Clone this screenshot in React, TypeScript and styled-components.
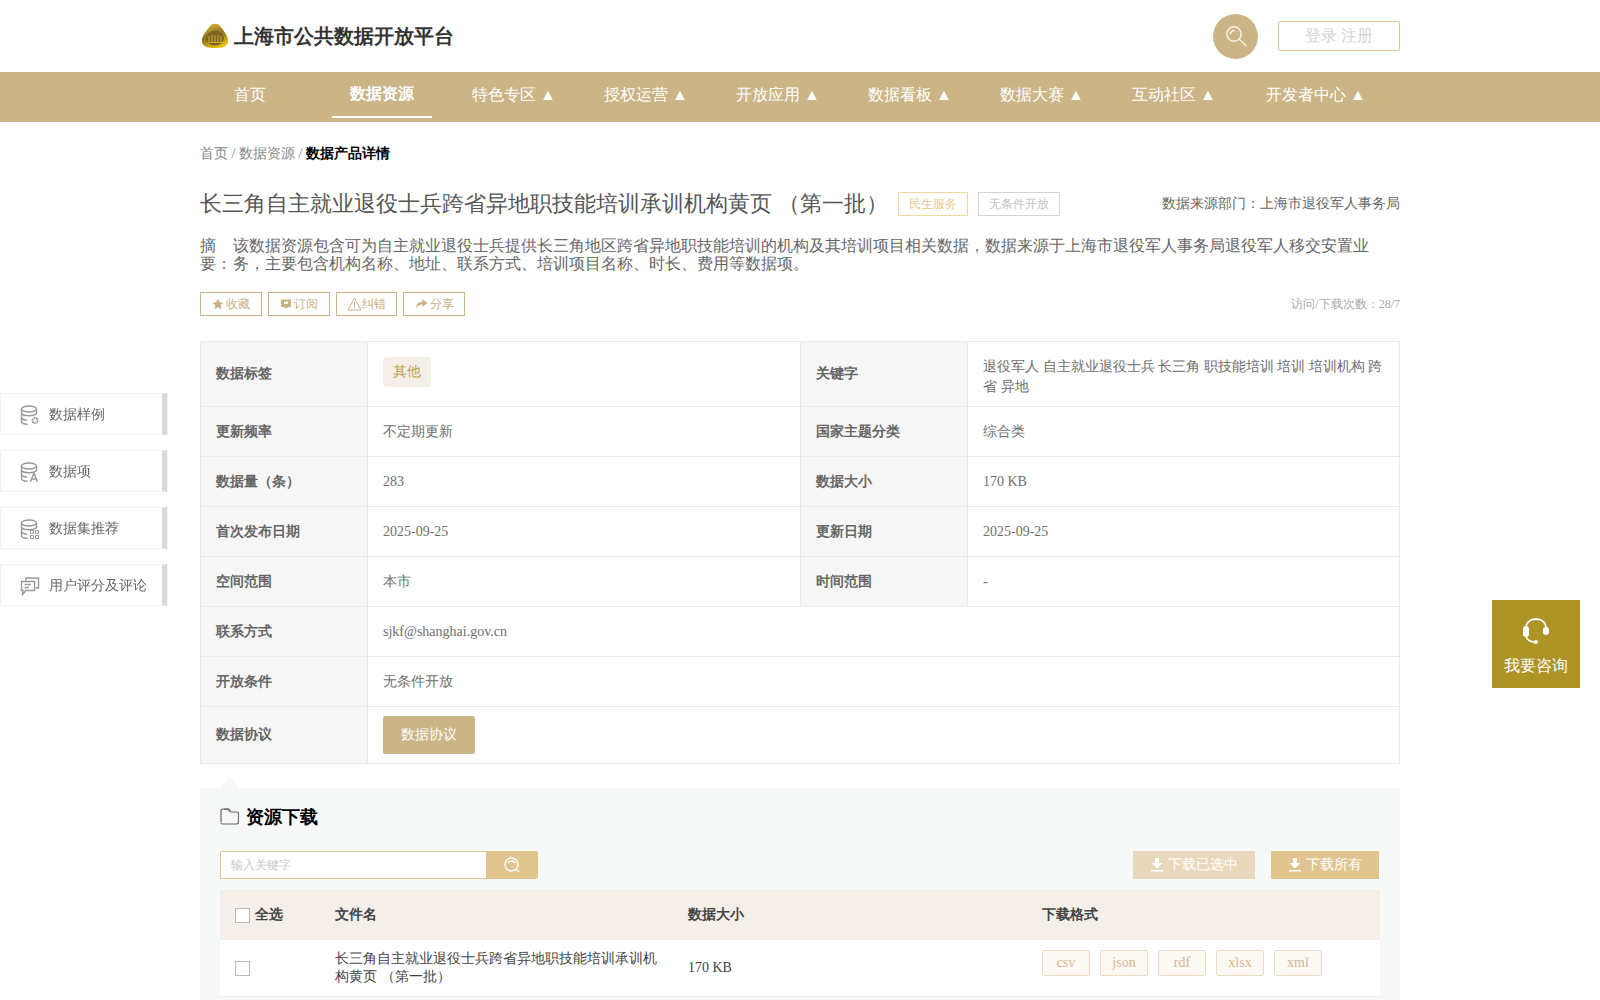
import styled, { createGlobalStyle } from 'styled-components';
import { ReactNode } from 'react';

const GlobalStyle = createGlobalStyle`
	html, body {
		margin: 0;
		padding: 0;
		height: 1000px;
		overflow: hidden;
		background: #fff;
		font-family: 'Liberation Serif', serif;
		color: #666;
	}
	* {
		box-sizing: border-box;
	}
`;

const navItems = [
	{ label: '首页' },
	{ label: '数据资源', active: true },
	{ label: '特色专区 ▲' },
	{ label: '授权运营 ▲' },
	{ label: '开放应用 ▲' },
	{ label: '数据看板 ▲' },
	{ label: '数据大赛 ▲' },
	{ label: '互动社区 ▲' },
	{ label: '开发者中心 ▲' },
];

const Logo = () => (
	<svg width="28" height="26" viewBox="0 0 28 26">
		<defs>
			<linearGradient id="logoGold" x1="0.2" y1="0" x2="0.6" y2="1">
				<stop offset="0" stopColor="#d9b93c" />
				<stop offset="0.5" stopColor="#8f701e" />
				<stop offset="1" stopColor="#e8c40c" />
			</linearGradient>
		</defs>
		<path
			d="M9 3C11 0 17 0 19 3C23 8 28 14 27 19C26 24 21 25 14 25C7 25 2 24 1 19C0 14 5 8 9 3Z"
			fill="url(#logoGold)"
		/>
		<ellipse cx="14" cy="15" rx="9" ry="7.500" fill="#7d6420" />
		<path d="M8 13V19M11 12V19M14 12V19M17 12V19M20 13V19M7 19.500H21" stroke="#c9a944" strokeWidth="1" />
	</svg>
);

const SearchGlyph = () => (
	<svg width="22" height="22" viewBox="0 0 22 22" fill="none" stroke="#f6f1e6" strokeWidth="1.500" strokeLinecap="round">
		<circle cx="9" cy="9" r="7.200" />
		<path d="M5.500 8.500C5.800 6.800 7 5.600 9 5.400" />
		<path d="M14.200 14.200L21 20.500" />
	</svg>
);

const KeywordGlyph = () => (
	<svg width="16" height="16" viewBox="0 0 16 16" fill="none" stroke="#fff" strokeWidth="1.300" strokeLinecap="round">
		<circle cx="7.500" cy="7.500" r="6.500" />
		<path d="M4 5.500C5 3.800 9.500 3.800 11 5.500" />
		<path d="M12.500 13L15 14.500" />
	</svg>
);

const Star = () => (
	<svg width="12" height="12" viewBox="0 0 12 12" fill="#c9b183">
		<path d="M6 .8l1.700 3.400 3.700.5-2.700 2.600.7 3.800L6 9.300l-3.400 1.800.7-3.800L.6 4.700l3.700-.5z" />
	</svg>
);

const Bookmark = () => (
	<svg width="12" height="12" viewBox="0 0 12 12">
		<path d="M1 1.500h10v7.500H8l-2 2-2-2H1z" fill="#c9b183" />
		<rect x="4" y="3.500" width="4" height="2.500" fill="#fff" />
	</svg>
);

const Warn = () => (
	<svg width="15" height="14" viewBox="0 0 15 14" fill="none" stroke="#c9b183" strokeWidth="1">
		<path d="M7.500 1L14 13H1z" />
		<path d="M7.500 5v4.500M7.500 10.500v1" />
	</svg>
);

const ShareArrow = () => (
	<svg width="13" height="12" viewBox="0 0 13 12" fill="#c9b183">
		<path d="M7.500 1L12.500 5 7.500 9V6.500C4.500 6.500 2.500 7.500 1 10.500 1.300 6.500 3.500 3.800 7.500 3.500z" />
	</svg>
);

const DownloadGlyph = () => (
	<svg width="12" height="14" viewBox="0 0 12 14" fill="#fff">
		<path d="M4 0h4v5h3.500L6 10.500.5 5H4z" />
		<rect x="0" y="12" width="12" height="1.500" />
	</svg>
);

const DbBase = () => (
	<>
		<ellipse cx="9" cy="4" rx="7.500" ry="3" />
		<path d="M1.500 4V16.500c0 1.500 2.500 2.600 6 2.800" />
		<path d="M16.500 4V9" />
		<path d="M1.500 8.500c1 1.500 3.500 2.200 7.500 2.200 3.200 0 6.300-.7 7.500-2.200" />
		<path d="M1.500 13c1 1.300 3 2 5.500 2.200" />
	</>
);

const SideIcon = ({ kind }: { kind: string }) => (
	<svg width="20" height="20" viewBox="0 0 20 20" fill="none" stroke="#999" strokeWidth="1.400">
		{kind === 'comment' ? (
			<>
				<path d="M6 5.500V2h12.500v10H15.500" />
				<path d="M1.500 5.500H14.500V14.500H6L2.500 18.500 3 14.500H1.500z" />
				<path d="M4.500 8.500H11M4.500 11.500H9" />
			</>
		) : (
			<>
				<DbBase />
				{kind === 'gear' && <circle cx="15" cy="15.500" r="2.600" strokeWidth="1.800" strokeDasharray="2 .6" />}
				{kind === 'letter' && <path d="M10.500 19.800L14 11 17.500 19.800M11.800 17H16.200" strokeWidth="1.500" />}
				{kind === 'grid' && (
					<path d="M10.500 11.500h3v3h-3zM15.500 11.500h3v3h-3zM10.500 16.500h3v3h-3zM15.500 16.500h3v3h-3z" strokeWidth="1" />
				)}
			</>
		)}
	</svg>
);

const sideItems = [
	{ label: '数据样例', icon: 'gear' },
	{ label: '数据项', icon: 'letter' },
	{ label: '数据集推荐', icon: 'grid' },
	{ label: '用户评分及评论', icon: 'comment' },
];

const actions: { label: string; icon: ReactNode }[] = [
	{ label: '收藏', icon: <Star /> },
	{ label: '订阅', icon: <Bookmark /> },
	{ label: '纠错', icon: <Warn /> },
	{ label: '分享', icon: <ShareArrow /> },
];

const formats = ['csv', 'json', 'rdf', 'xlsx', 'xml'];

const App = () => {
	return (
		<>
			<GlobalStyle />
			<Header>
				<HeaderInner>
					<Brand>
						<Logo />
						<BrandName>上海市公共数据开放平台</BrandName>
					</Brand>
					<HeaderRight>
						<SearchCircle>
							<SearchGlyph />
						</SearchCircle>
						<LoginBox>登录 注册</LoginBox>
					</HeaderRight>
				</HeaderInner>
			</Header>
			<NavBar>
				<NavInner>
					{navItems.map((item) => (
						<NavItem key={item.label} $active={item.active}>
							{item.label}
						</NavItem>
					))}
				</NavInner>
			</NavBar>

			<Main>
				<Breadcrumb>
					首页 / 数据资源 / <strong>数据产品详情</strong>
				</Breadcrumb>
				<TitleRow>
					<Title>长三角自主就业退役士兵跨省异地职技能培训承训机构黄页 （第一批）</Title>
					<TitleTag $tone="gold">民生服务</TitleTag>
					<TitleTag $tone="grey">无条件开放</TitleTag>
					<Source>数据来源部门：上海市退役军人事务局</Source>
				</TitleRow>
				<Summary>
					<SummaryLabel>
						摘<br />要：
					</SummaryLabel>
					<SummaryText>
						该数据资源包含可为自主就业退役士兵提供长三角地区跨省异地职技能培训的机构及其培训项目相关数据，数据来源于上海市退役军人事务局退役军人移交安置业务，主要包含机构名称、地址、联系方式、培训项目名称、时长、费用等数据项。
					</SummaryText>
				</Summary>
				<ActionRow>
					<Actions>
						{actions.map((a) => (
							<ActionButton key={a.label}>
								{a.icon}
								{a.label}
							</ActionButton>
						))}
					</Actions>
					<Visits>访问/下载次数：28/7</Visits>
				</ActionRow>

				<InfoTable>
					<colgroup>
						<col width="167" />
						<col width="433" />
						<col width="167" />
						<col width="432" />
					</colgroup>
					<tbody>
						<InfoRow $height={65}>
							<LabelCell>数据标签</LabelCell>
							<ValueCell>
								<TagChip>其他</TagChip>
							</ValueCell>
							<LabelCell>关键字</LabelCell>
							<ValueCell>
								<Keywords>退役军人 自主就业退役士兵 长三角 职技能培训 培训 培训机构 跨省 异地</Keywords>
							</ValueCell>
						</InfoRow>
						<InfoRow>
							<LabelCell>更新频率</LabelCell>
							<ValueCell>不定期更新</ValueCell>
							<LabelCell>国家主题分类</LabelCell>
							<ValueCell>综合类</ValueCell>
						</InfoRow>
						<InfoRow>
							<LabelCell>数据量（条）</LabelCell>
							<ValueCell>283</ValueCell>
							<LabelCell>数据大小</LabelCell>
							<ValueCell>170 KB</ValueCell>
						</InfoRow>
						<InfoRow>
							<LabelCell>首次发布日期</LabelCell>
							<ValueCell>2025-09-25</ValueCell>
							<LabelCell>更新日期</LabelCell>
							<ValueCell>2025-09-25</ValueCell>
						</InfoRow>
						<InfoRow>
							<LabelCell>空间范围</LabelCell>
							<ValueCell>本市</ValueCell>
							<LabelCell>时间范围</LabelCell>
							<ValueCell>-</ValueCell>
						</InfoRow>
						<InfoRow>
							<LabelCell>联系方式</LabelCell>
							<ValueCell colSpan={3}>sjkf@shanghai.gov.cn</ValueCell>
						</InfoRow>
						<InfoRow>
							<LabelCell>开放条件</LabelCell>
							<ValueCell colSpan={3}>无条件开放</ValueCell>
						</InfoRow>
						<InfoRow $height={57}>
							<LabelCell>数据协议</LabelCell>
							<ValueCell colSpan={3}>
								<AgreementButton>数据协议</AgreementButton>
							</ValueCell>
						</InfoRow>
					</tbody>
				</InfoTable>

				<DownloadSection>
					<SectionTitle>
						<svg width="19" height="17" viewBox="0 0 19 17" fill="none" stroke="#666" strokeWidth="1.200">
							<path d="M1 14V3a2 2 0 0 1 2-2h4.500l2 2.500" />
							<path d="M4 1.200h5l2 2.800h6a1.500 1.500 0 0 1 1.500 1.500V14a2 2 0 0 1-2 2H2.500A1.500 1.500 0 0 1 1 14.500" />
						</svg>
						<SectionName>资源下载</SectionName>
					</SectionTitle>
					<Toolbar>
						<SearchGroup>
							<KeywordInput placeholder="输入关键字" />
							<KeywordButton>
								<KeywordGlyph />
							</KeywordButton>
						</SearchGroup>
						<DownloadActions>
							<DownloadButton $muted>
								<DownloadGlyph />
								下载已选中
							</DownloadButton>
							<DownloadButton>
								<DownloadGlyph />
								下载所有
							</DownloadButton>
						</DownloadActions>
					</Toolbar>
					<FileTable>
						<FileHead>
							<CheckCol>
								<CheckBox />
								<strong>全选</strong>
							</CheckCol>
							<NameCol>
								<strong>文件名</strong>
							</NameCol>
							<SizeCol>
								<strong>数据大小</strong>
							</SizeCol>
							<FormatCol>
								<strong>下载格式</strong>
							</FormatCol>
						</FileHead>
						<FileRow>
							<CheckCol>
								<CheckBox />
							</CheckCol>
							<NameCol>长三角自主就业退役士兵跨省异地职技能培训承训机构黄页 （第一批）</NameCol>
							<SizeCol>170 KB</SizeCol>
							<FormatCol>
								<Chips>
									{formats.map((f) => (
										<FormatChip key={f}>{f}</FormatChip>
									))}
								</Chips>
							</FormatCol>
						</FileRow>
					</FileTable>
				</DownloadSection>
			</Main>

			<SideMenu>
				{sideItems.map((item) => (
					<SideItem key={item.label}>
						<SideIcon kind={item.icon} />
						{item.label}
					</SideItem>
				))}
			</SideMenu>

			<Consult>
				<svg width="28" height="28" viewBox="0 0 28 28" fill="none">
					<path d="M4 14V11C4 5.500 8.500 2 14 2S24 5.500 24 11V14" stroke="#fff" strokeWidth="1.800" />
					<path d="M4 19C5 23 8 25 13 25" stroke="#fff" strokeWidth="1.500" />
					<rect x="1" y="9" width="6" height="11" rx="3" fill="#fff" />
					<rect x="21" y="10" width="6" height="8" rx="3" fill="#fff" />
					<circle cx="14" cy="25" r="2" fill="#fff" />
				</svg>
				我要咨询
			</Consult>
		</>
	);
};

export default App;

const Header = styled.header`
	height: 72px;
`;
const HeaderInner = styled.div`
	width: 1200px;
	height: 100%;
	margin: 0 auto;
	display: flex;
	align-items: center;
	justify-content: space-between;
`;
const Brand = styled.div`
	display: flex;
	align-items: center;
	gap: 5px;
	padding-left: 1px;
`;
const BrandName = styled.span`
	font-size: 20px;
	font-weight: 700;
	color: #333;
`;
const HeaderRight = styled.div`
	display: flex;
	align-items: center;
	gap: 20px;
`;
const SearchCircle = styled.div`
	width: 45px;
	height: 45px;
	border-radius: 50%;
	background: #cbb486;
	display: flex;
	align-items: center;
	justify-content: center;
`;
const LoginBox = styled.div`
	width: 122px;
	height: 30px;
	border: 1px solid #e2c691;
	border-radius: 2px;
	color: #d4d4d4;
	font-size: 16px;
	line-height: 28px;
	text-align: center;
`;
const NavBar = styled.nav`
	height: 50px;
	background: #cbb486;
`;
const NavInner = styled.div`
	width: 1200px;
	height: 100%;
	margin: 0 auto;
	display: flex;
	gap: 32px;
`;
const NavItem = styled.a<{ $active?: boolean }>`
	min-width: 100px;
	height: 46px;
	padding: 0 8px;
	color: #fff;
	font-size: 16px;
	font-weight: ${(p) => (p.$active ? 700 : 400)};
	line-height: ${(p) => (p.$active ? '44px' : '46px')};
	text-align: center;
	white-space: nowrap;
	border-bottom: 2px solid ${(p) => (p.$active ? '#fff' : 'transparent')};
	&:last-child {
		padding-left: 10px;
		text-align: left;
	}
`;
const Main = styled.main`
	width: 1200px;
	margin: 0 auto;
`;
const Breadcrumb = styled.div`
	margin-top: 23px;
	font-size: 14px;
	line-height: 18px;
	color: #888;
	strong {
		color: #000;
	}
`;
const TitleRow = styled.div`
	margin-top: 25px;
	height: 32px;
	display: flex;
	align-items: center;
`;
const Title = styled.h1`
	margin: 0 10px 0 0;
	font-size: 22px;
	font-weight: 400;
	color: #555;
	white-space: nowrap;
`;
const TitleTag = styled.span<{ $tone: 'gold' | 'grey' }>`
	height: 24px;
	margin-right: 10px;
	padding: 0 10px;
	font-size: 12px;
	line-height: 22px;
	border: 1px solid ${(p) => (p.$tone === 'gold' ? '#f3d79c' : '#d4d4d4')};
	color: ${(p) => (p.$tone === 'gold' ? '#e9c98c' : '#c4c4c4')};
`;
const Source = styled.span`
	margin-left: auto;
	font-size: 14px;
	color: #666;
`;
const Summary = styled.div`
	margin-top: 17px;
	display: flex;
	font-size: 16px;
	line-height: 18px;
	color: #666;
`;
const SummaryLabel = styled.div`
	flex: none;
	width: 33px;
`;
const SummaryText = styled.div`
	width: 1137px;
`;
const ActionRow = styled.div`
	margin-top: 19px;
	display: flex;
	align-items: center;
	justify-content: space-between;
`;
const Actions = styled.div`
	display: flex;
	gap: 6px;
`;
const ActionButton = styled.button`
	width: 62px;
	height: 24px;
	padding: 0;
	display: flex;
	align-items: center;
	justify-content: center;
	gap: 2px;
	background: #fff;
	border: 1px solid #cbb486;
	color: #c9b183;
	font-family: inherit;
	font-size: 12px;
	&:nth-child(3) {
		width: 61px;
		gap: 0;
	}
`;
const Visits = styled.span`
	font-size: 12px;
	color: #aaa;
`;
const InfoTable = styled.table`
	width: 1199px;
	margin-top: 25px;
	border-collapse: collapse;
	table-layout: fixed;
	font-size: 14px;
`;
const InfoRow = styled.tr<{ $height?: number }>`
	height: ${(p) => p.$height ?? 50}px;
`;
const LabelCell = styled.td`
	padding: 0 15px;
	background: #f6f6f6;
	border: 1px solid #e9e9e9;
	font-weight: 700;
	line-height: 20px;
	color: #666;
`;
const ValueCell = styled.td`
	padding: 0 15px;
	border: 1px solid #e9e9e9;
	line-height: 20px;
	color: #6e6e6e;
`;
const Keywords = styled.div`
	margin-top: 5px;
`;
const TagChip = styled.span`
	display: block;
	width: fit-content;
	margin-bottom: 4px;
	padding: 0 10px;
	height: 30px;
	line-height: 30px;
	border-radius: 3px;
	background: #f4efe8;
	color: #bda136;
`;
const AgreementButton = styled.button`
	display: block;
	width: 92px;
	height: 38px;
	padding: 0;
	border: 0;
	border-radius: 2px;
	background: #cbb486;
	color: #fff;
	font-family: inherit;
	font-size: 14px;
`;
const DownloadSection = styled.section`
	position: relative;
	margin-top: 24px;
	padding: 0 20px;
	height: 214px;
	background: #f7f9f9;
	&::before {
		content: '';
		position: absolute;
		top: -12px;
		left: 20px;
		border-left: 10px solid transparent;
		border-right: 10px solid transparent;
		border-bottom: 12px solid #f7f9f9;
	}
`;
const SectionTitle = styled.div`
	height: 63px;
	padding-bottom: 6px;
	display: flex;
	align-items: center;
	gap: 7px;
`;
const SectionName = styled.span`
	font-size: 18px;
	font-weight: 700;
	color: #000;
`;
const Toolbar = styled.div`
	display: flex;
	justify-content: space-between;
	height: 28px;
`;
const SearchGroup = styled.div`
	display: flex;
`;
const KeywordInput = styled.input`
	width: 266px;
	height: 28px;
	padding: 0 10px;
	border: 1px solid #e0c591;
	border-right: 0;
	border-radius: 2px 0 0 2px;
	outline: none;
	background: #fff;
	font-family: inherit;
	font-size: 12px;
	&::placeholder {
		color: #c8c8c8;
	}
`;
const KeywordButton = styled.div`
	width: 52px;
	height: 28px;
	display: flex;
	align-items: center;
	justify-content: center;
	border-radius: 0 2px 2px 0;
	background: #e0c591;
`;
const DownloadActions = styled.div`
	display: flex;
	gap: 16px;
	padding-right: 1px;
`;
const DownloadButton = styled.button<{ $muted?: boolean }>`
	height: 28px;
	padding: 0 17.5px;
	display: flex;
	align-items: center;
	gap: 5px;
	border: 0;
	background: ${(p) => (p.$muted ? '#e9d8bb' : '#e0c591')};
	color: #fff;
	font-family: inherit;
	font-size: 14px;
`;
const FileTable = styled.div`
	margin-top: 11px;
	font-size: 14px;
	line-height: 18px;
	color: #444;
`;
const FileHead = styled.div`
	height: 50px;
	display: flex;
	align-items: center;
	background: #f4efe8;
	color: #444;
`;
const FileRow = styled.div`
	height: 57px;
	display: flex;
	align-items: center;
	background: #fff;
	border-bottom: 1px solid #eee;
`;
const CheckCol = styled.div`
	width: 115px;
	padding-left: 15px;
	display: flex;
	align-items: center;
	gap: 5px;
`;
const NameCol = styled.div`
	width: 353px;
	padding-right: 25px;
`;
const SizeCol = styled.div`
	width: 354px;
`;
const FormatCol = styled.div`
	flex: 1;
	align-self: stretch;
	display: flex;
	align-items: center;
`;
const CheckBox = styled.span`
	width: 15px;
	height: 15px;
	background: #fff;
	border: 1px solid #b9b9b9;
`;
const Chips = styled.div`
	display: flex;
	gap: 10px;
	margin-bottom: 10px;
`;
const FormatChip = styled.span`
	width: 48px;
	height: 26px;
	line-height: 24px;
	text-align: center;
	border: 1px solid #ebdcc0;
	border-radius: 2px;
	background: #fdf9f4;
	color: #d6b78e;
`;
const SideMenu = styled.aside`
	position: fixed;
	left: 0;
	top: 393px;
	display: flex;
	flex-direction: column;
	gap: 15px;
`;
const SideItem = styled.div`
	width: 167px;
	height: 42px;
	padding: 2px 0 0 19px;
	display: flex;
	align-items: center;
	gap: 9px;
	background: #fff;
	border: 1px solid #f3f3f3;
	border-right: 5px solid #d8d8d8;
	font-size: 14px;
	color: #666;
	box-shadow: 1px 0 0 #f3f3f3;
`;
const Consult = styled.div`
	position: fixed;
	left: 1492px;
	top: 600px;
	width: 88px;
	height: 88px;
	padding-top: 17px;
	display: flex;
	flex-direction: column;
	align-items: center;
	gap: 10px;
	background: #ad9424;
	color: #fff;
	font-size: 16px;
	line-height: 22px;
`;
